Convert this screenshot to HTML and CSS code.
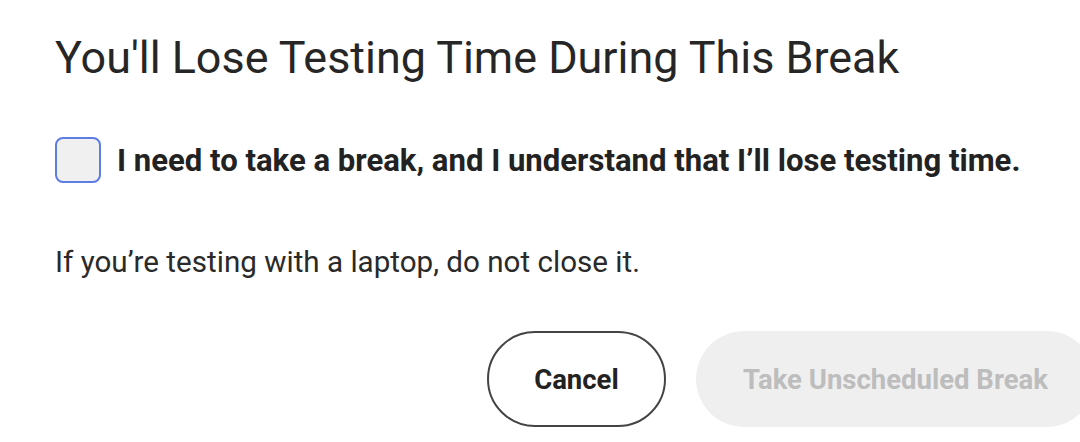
FILE: index.html
```html
<!DOCTYPE html>
<html>
<head>
<meta charset="utf-8">
<link rel="stylesheet" href="styles.css">
</head>
<body>
<div class="dialog">
  <h1 class="title">You'll Lose Testing Time During This Break</h1>
  <label class="confirm">
    <span class="box"></span>
    <span class="confirm-text">I need to take a break, and I understand that I’ll lose testing time.</span>
  </label>
  <p class="note">If you’re testing with a laptop, do not close it.</p>
  <div class="actions">
    <button class="btn btn-cancel">Cancel</button>
    <button class="btn btn-take" disabled>Take Unscheduled Break</button>
  </div>
</div>
</body>
</html>
```
FILE: styles.css
```css
html, body {
  margin: 0;
  padding: 0;
  background: #ffffff;
  overflow: hidden;
}
body {
  font-family: Roboto, "Liberation Sans", sans-serif;
  color: #222222;
}
.dialog {
  width: 1040px;
  padding: 32px 0 0 55px;
  display: flex;
  flex-direction: column;
}
.title {
  margin: 0;
  font-size: 44.9px;
  font-weight: 400;
  line-height: 52px;
  color: #262626;
}
.confirm {
  display: flex;
  align-items: center;
  gap: 16px;
  margin-top: 53px;
}
.box {
  width: 42px;
  height: 42px;
  border: 2px solid #5d7de4;
  border-radius: 8px;
  background: #f0f0f0;
  flex: none;
}
.confirm-text {
  font-size: 31.1px;
  font-weight: 700;
  color: #222222;
}
.note {
  margin: 61px 0 0 0;
  font-size: 29.6px;
  line-height: 36px;
  color: #2a2a2a;
}
.actions {
  display: flex;
  justify-content: flex-end;
  gap: 30px;
  margin-top: 51px;
}
.btn {
  font-family: Roboto, "Liberation Sans", sans-serif;
  font-size: 27.5px;
  font-weight: 700;
  height: 96px;
  border-radius: 48px;
  padding: 0 47px;
}
.btn-cancel {
  background: #ffffff;
  border: 2px solid #444444;
  color: #222222;
  width: 179px;
  padding: 0;
}
.btn-take {
  background: #efefef;
  border: none;
  color: #bdbdbd;
}
```
